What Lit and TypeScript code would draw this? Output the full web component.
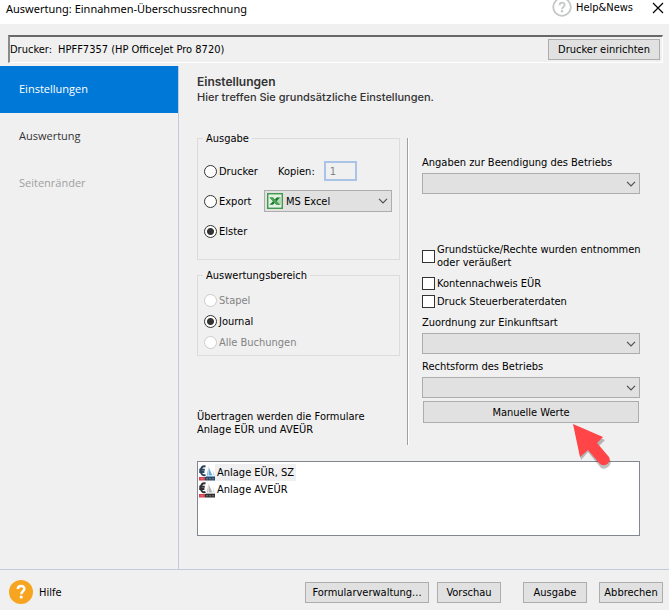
import { LitElement, html, css, svg, nothing } from "lit";
import { customElement, property, state } from "lit/decorators.js";
import { classMap } from "lit/directives/class-map.js";

const chevron = html`<svg class="chevron" width="10" height="6" viewBox="0 0 10 6" aria-hidden="true">
  <path d="M1 .8 5 4.8 9 .8" fill="none" stroke="#505050" stroke-width="1.2" />
</svg>`;

const excelIcon = html`<svg class="excel" width="16" height="16" viewBox="0 0 16 16" aria-hidden="true">
  <rect x=".75" y=".75" width="14.5" height="14.5" fill="#fff" stroke="#3f9a4c" stroke-width="1.5" />
  <rect x="2" y="2" width="12" height="12" fill="#e3f1e0" />
  <path d="M10 5h4M10 7h4M10 9h4M10 11h4" stroke="#8cc08a" />
  <path d="M2.500 4.500h3.500l1.700 2L9.700 4.500H13L9.600 8.200l3.400 3.600H9.500L7.700 10 6 11.800H2.500L6 8.200Z" fill="#1f7a34" />
  <path d="M2.500 4.500H6l7 7.300H9.500Z" fill="#4ba557" />
</svg>`;

const formIcon = (coloured: boolean) => {
  const ink = coloured ? "#2b4560" : "#303030";
  const sail = coloured ? "#6fa9d6" : "#b4b4b4";
  return html`<svg class="form-icon" width="16" height="16" viewBox="0 0 16 16" aria-hidden="true">
    ${svg`<path d="M6.500 1.500C3.500.4 1.700 3 1.700 5.800s2 5.300 4.800 4.200M.2 4.800h5.600M.2 7h5.200" fill="none" stroke=${ink} stroke-width="2"/>
    <path d="M9.500 1v9.500H8Z" fill=${sail}/><path d="M10 3l3.500 7.500H10Z" fill=${sail}/>
    <path d="M13.500 5l2.300 5.500h-1.300Z" fill=${sail} opacity=".6"/>
    <path d="M7 11h9v1H7Z" fill=${sail}/>
    <rect y="12" width="6" height="3.500" fill="#d9404c"/><rect x="6" y="12" width="10" height="3.500" fill=${ink}/>
    <path d="M1.500 13.800h3M7 13.800h2M10 13.800h2M13 13.800h2" stroke="#fff" stroke-opacity=".35"/>`}
  </svg>`;
};

const controls = css`
  * { box-sizing: border-box; }
  select, button, input { font: inherit; color: inherit; margin: 0; }
  button, select {
    background: #e1e1e1;
    border: 1px solid #adadad;
    border-radius: 0;
    height: 21px;
  }
  button { padding: 0 9px; line-height: 19px; white-space: nowrap; }
`;

@customElement("drop-down")
class DropDown extends LitElement {
  @property() label = "";
  @property() caption = "";
  @property() value = "";
  static styles = [controls, css`
    :host { display: block; }
    label { display: block; line-height: 13px; margin-bottom: 4px; }
    .box { position: relative; }
    select { display: block; width: 100%; appearance: none; padding: 0 20px 0 8px; background: #e1e1e1; }
    .with-icon select { padding-left: 21px; height: 22px; }
    .chevron { position: absolute; right: 4px; top: 8px; pointer-events: none; }
    .excel { position: absolute; left: 3px; top: 3px; pointer-events: none; }
  `];
  render() {
    return html`
      ${this.label ? html`<label for="field">${this.label}</label>` : nothing}
      <div class=${classMap({ box: true, "with-icon": this.value !== "" })}>
        <select id="field" aria-label=${this.label || this.caption}><option>${this.value}</option></select>
        ${this.value ? excelIcon : nothing}${chevron}
      </div>`;
  }
}

@customElement("app-root")
class AppRoot extends LitElement {
  @state() private output = "Elster";
  @state() private range = "Journal";

  static styles = [controls, css`
    :host {
      display: flex;
      flex-direction: column;
      min-height: 100vh;
      background: #f0f0f0;
      color: #000;
      font: 11px/13px "DejaVu Sans Condensed", "Noto Sans", sans-serif;
    }
    .titlebar {
      display: flex;
      justify-content: space-between;
      height: 24px;
      overflow: hidden;
      background: #fff;
      padding: 0 5px 0 6px;
    }
    .title { margin: 0; font: 11px/18px "Noto Sans", sans-serif; }
    .window-tools { display: flex; }
    .news {
      display: flex;
      gap: 4px;
      height: 15px;
      align-items: center;
      color: inherit;
      text-decoration: none;
      margin-right: 19px;
    }
    .news svg { flex: none; }
    .close { border: 0; background: none; padding: 0; width: 12px; height: 16px; display: flex; align-items: center; }
    .printer {
      display: flex;
      align-items: center;
      justify-content: space-between;
      margin: 11px 6px 3px 8px;
      height: 28px;
      padding: 0 2px 0 0;
      border: 1px solid #fff;
      border-top: 2px solid #696969;
      border-left: 2px solid #8a8a8a;
    }
    .printer-name { display: flex; gap: 6px; }
    .body { display: flex; flex: 1; }
    nav { width: 179px; flex: none; border-right: 1px solid #c3cadb; }
    nav a {
      display: block;
      padding: 0 19px 2px;
      font: 11px/45px "Open Sans", sans-serif;
      color: #333;
      text-decoration: none;
    }
    nav a.current { background: #0078d7; color: #fff; }
    nav a.off { color: #a0a0a0; }
    main { flex: 1; min-width: 0; padding: 8px 29px 33px 18px; }
    h1 { margin: 0; font: 600 12px/16px Inter, sans-serif; color: #333; }
    .intro { margin: 0 0 27px; font: 500 11px/15px Inter, sans-serif; color: #333; }
    .columns { display: grid; grid-template-columns: 203px minmax(0, 1fr); column-gap: 7px; }
    .left { display: flex; flex-direction: column; }
    fieldset { margin: 0; border: 1px solid #dcdcdc; padding: 0 7px 0 6px; min-width: 0; }
    legend { padding: 0 3px; margin-left: -1px; line-height: 13px; }
    .output { height: 128px; margin-bottom: 9px; }
    .range { padding: 8px 6px 2px; margin-bottom: 54px; }
    .row { display: grid; grid-template-columns: 60px 1fr; align-items: center; }
    .output .row { margin-top: 9px; }
    .output .row:first-of-type { margin-top: 16px; }
    .output .row.last { margin-top: 13px; }
    .copies { display: flex; align-items: center; gap: 9px; padding-left: 14px; }
    .copies input {
      width: 33px;
      height: 20px;
      border: 2px solid #a9c4e6;
      background: #f0f0f0;
      padding: 0 4px;
      -webkit-text-fill-color: #838383;
    }
    .choice { display: flex; align-items: center; gap: 2px; white-space: nowrap; }
    .range .choice { height: 21px; }
    .choice.off { color: #838383; }
    input[type="radio"], input[type="checkbox"] {
      appearance: none;
      flex: none;
      width: 13px;
      height: 13px;
      border: 1px solid #333;
      background: #fff;
    }
    input[type="radio"] { border-radius: 50%; }
    input[type="radio"]:checked { background: radial-gradient(circle, #333 3px, #fff 4px); }
    input[type="radio"]:disabled { border-color: #ccc; }
    .right {
      margin: 6px 0 0;
      padding: 18px 0 22px 14px;
      border-left: 1px solid #a0a0a0;
      box-shadow: inset 1px 0 #fff;
    }
    .checks { margin: 49px 0 8px; display: flex; flex-direction: column; gap: 5px; }
    .first-check { margin-bottom: 3px; }
    .second { margin-top: 6px; }
    .note { margin: 0; }
    .manual { position: relative; margin: 3px 1px 0; }
    .manual button { width: 100%; height: 22px; }
    .pointer { position: absolute; right: 24px; top: 22px; pointer-events: none; overflow: visible; }
    .forms {
      margin: 16px 0 0;
      height: 75px;
      padding: 2px 1px;
      border: 1px solid #828790;
      background: #fff;
      list-style: none;
    }
    .forms li { display: flex; height: 17px; align-items: center; }
    .forms span { padding: 2px; }
    .forms .selected span { background: #f0f0f0; }
    footer {
      display: flex;
      align-items: center;
      height: 41px;
      padding: 4px 6px 0 9px;
      border-top: 1px solid #c3cadb;
    }
    .help { display: flex; align-items: center; gap: 6px; color: inherit; text-decoration: none; margin-right: auto; }
    footer button { padding: 0; width: 64px; margin-left: 8px; }
    footer .wide { width: 124px; }
    footer .apply { margin-left: 22px; }
    footer .cancel { margin-left: 12px; }
  `];

  private radio(group: "output" | "range", name: string, off = false) {
    return html`<label class=${classMap({ choice: true, off })}>
      <input type="radio" name=${group} .checked=${this[group] === name} ?disabled=${off}
        @change=${() => { this[group] = name; }} />${name}</label>`;
  }

  render() {
    return html`
      <header class="titlebar">
        <p class="title">Auswertung: Einnahmen-Überschussrechnung</p>
        <div class="window-tools">
          <a class="news" href="#news">
            <svg width="20" height="20" viewBox="0 0 20 20" aria-hidden="true">
              <circle cx="10" cy="9" r="8.800" fill="#fff" stroke="#c4c8c8" stroke-width="1.800" />
              <path d="M7.600 7.200c0-3.400 5-3.200 5-.2 0 2-2.500 2-2.500 4.200" fill="none" stroke="#c4c8c8" stroke-width="1.800" />
              <circle cx="10" cy="13.300" r="1.200" fill="#c4c8c8" />
            </svg>Help&amp;News</a>
          <button class="close" aria-label="Schließen">
            <svg width="12" height="12" viewBox="0 0 12 12"><path d="M1 1l10 10M11 1 1 11" stroke="#000" stroke-width="1.200" /></svg>
          </button>
        </div>
      </header>
      <section class="printer">
        <div class="printer-name"><span>Drucker:</span><span>HPFF7357 (HP OfficeJet Pro 8720)</span></div>
        <button>Drucker einrichten</button>
      </section>
      <div class="body">
        <nav>
          <a class="current" href="#einstellungen">Einstellungen</a>
          <a href="#auswertung">Auswertung</a>
          <a class="off" href="#seitenraender">Seitenränder</a>
        </nav>
        <main>
          <h1>Einstellungen</h1>
          <p class="intro">Hier treffen Sie grundsätzliche Einstellungen.</p>
          <div class="columns">
            <div class="left">
              <fieldset class="output">
                <legend>Ausgabe</legend>
                <div class="row">${this.radio("output", "Drucker")}
                  <div class="copies"><label for="copies">Kopien:</label><input id="copies" value="1" disabled /></div>
                </div>
                <div class="row">${this.radio("output", "Export")}
                  <drop-down caption="Exportformat" value="MS Excel"></drop-down>
                </div>
                <div class="row last">${this.radio("output", "Elster")}</div>
              </fieldset>
              <fieldset class="range">
                <legend>Auswertungsbereich</legend>
                ${this.radio("range", "Stapel", true)}
                ${this.radio("range", "Journal")}
                ${this.radio("range", "Alle Buchungen", true)}
              </fieldset>
              <p class="note">Übertragen werden die Formulare<br />Anlage EÜR und AVEÜR</p>
            </div>
            <div class="right">
              <drop-down label="Angaben zur Beendigung des Betriebs"></drop-down>
              <div class="checks">
                <label class="choice first-check"><input type="checkbox" /><span>Grundstücke/Rechte wurden entnommen<br />oder veräußert</span></label>
                <label class="choice"><input type="checkbox" />Kontennachweis EÜR</label>
                <label class="choice"><input type="checkbox" />Druck Steuerberaterdaten</label>
              </div>
              <drop-down label="Zuordnung zur Einkunftsart"></drop-down>
              <drop-down class="second" label="Rechtsform des Betriebs"></drop-down>
              <div class="manual">
                <button>Manuelle Werte</button>
                <svg class="pointer" width="42" height="50" viewBox="0 0 42 50" aria-hidden="true">
                  <path d="M1 3 8 36l7-8 13 16c4 3 12-3 9-8L25 23l7-7Z" fill="#000" opacity=".25" transform="translate(0 1)" />
                  <path d="M0 1 7 34l8-7 12 14c5 4 12-2 9-7L24 20l6-6Z" fill="#ff4548" />
                </svg>
              </div>
            </div>
          </div>
          <ul class="forms">
            <li class="selected">${formIcon(true)}<span>Anlage EÜR, SZ</span></li>
            <li>${formIcon(false)}<span>Anlage AVEÜR</span></li>
          </ul>
        </main>
      </div>
      <footer>
        <a class="help" href="#hilfe">
          <svg width="24" height="24" viewBox="0 0 24 24" aria-hidden="true">
            <circle cx="12" cy="12" r="12" fill="#f7a521" />
            <path d="M8.800 9c.3-4 7-3.800 6.500.2-.3 2.200-3 2.300-3 5" fill="none" stroke="#fff" stroke-width="2.500" />
            <circle cx="12.200" cy="17" r="1.600" fill="#fff" />
          </svg>Hilfe</a>
        <button class="wide">Formularverwaltung...</button>
        <button>Vorschau</button>
        <button class="apply">Ausgabe</button>
        <button class="cancel">Abbrechen</button>
      </footer>`;
  }
}
